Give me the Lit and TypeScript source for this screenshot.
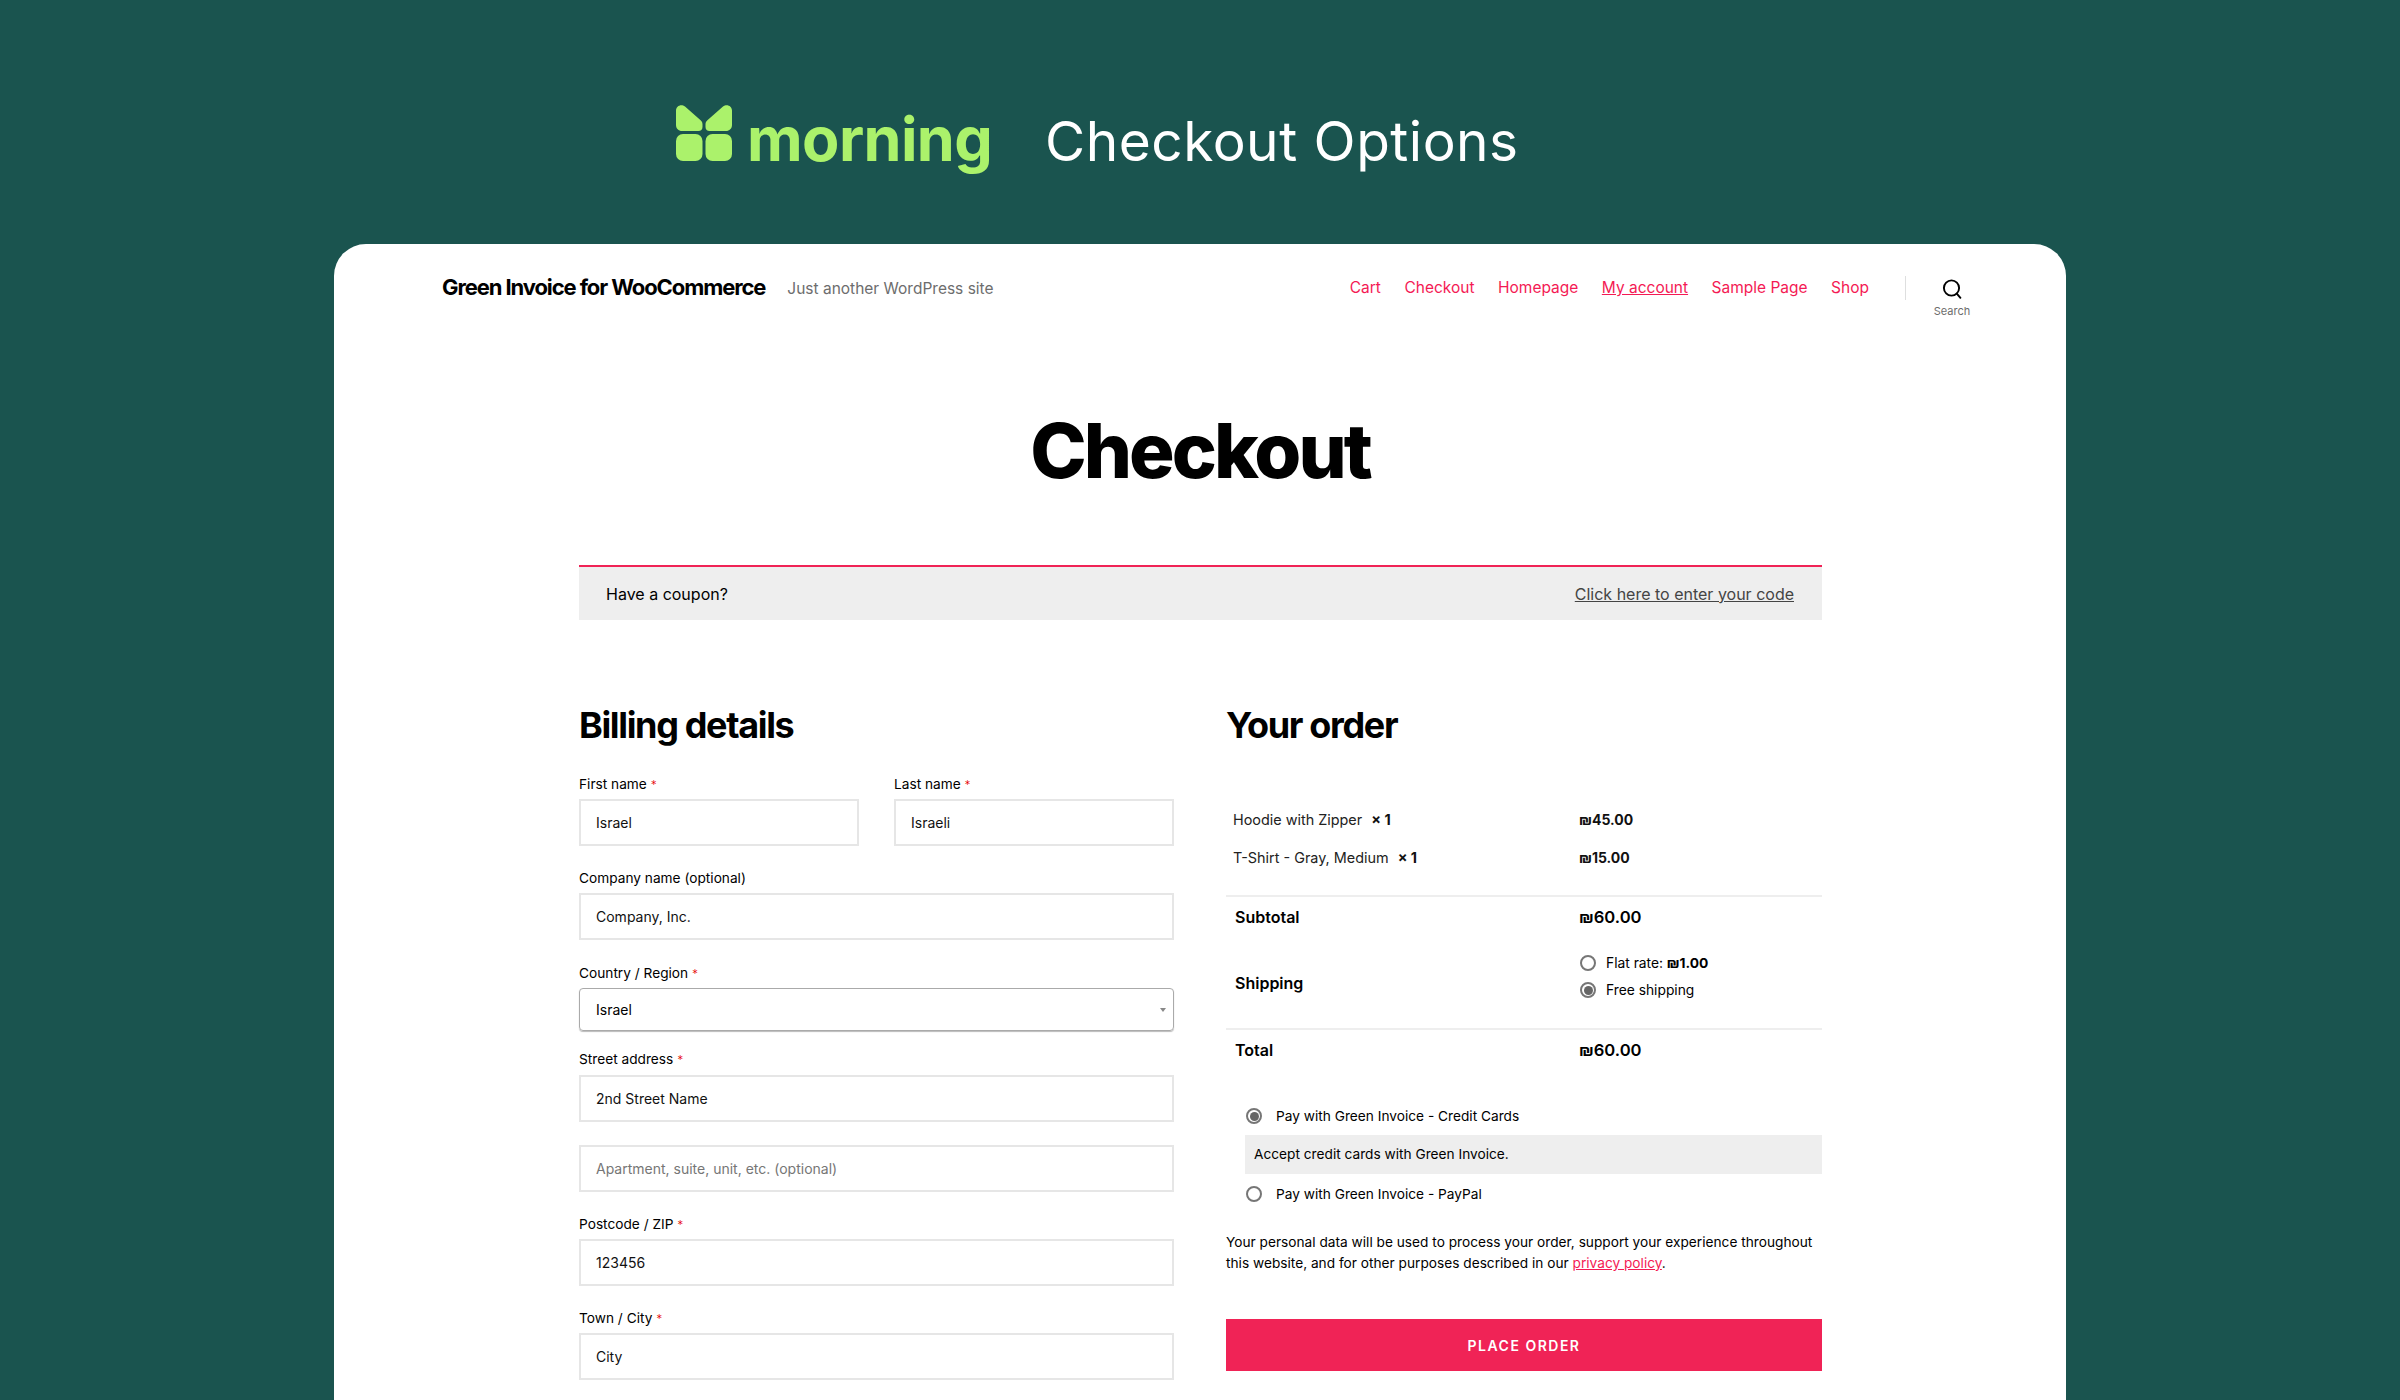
import { LitElement, html, css } from "lit";
import { customElement } from "lit/decorators.js";

@customElement("app-root")
export class AppRoot extends LitElement {
  static styles = css`
    :host {
      display: block;
      width: 2400px;
      height: 1400px;
      overflow: hidden;
      background: #1a544f;
      font-family: Inter, "Liberation Sans", sans-serif;
      color: #000;
    }
    .banner {
      display: flex;
      align-items: flex-start;
      height: 244px;
      box-sizing: border-box;
      padding: 105px 0 0 676px;
    }
    .logo-mark {
      width: 56px;
      height: 56px;
      flex: none;
    }
    .logo-word {
      margin: 6px 0 0 15px;
      font-size: 61px;
      font-weight: 700;
      line-height: 56px;
      letter-spacing: -0.6px;
      color: #abf26b;
      width: 298px;
    }
    .banner-title {
      margin-top: 8px;
      font-size: 55px;
      font-weight: 400;
      line-height: 56px;
      color: #fff;
      letter-spacing: 0.5px;
    }
    .card {
      margin: 0 334px;
      height: 1156px;
      background: #fff;
      border-radius: 32px 32px 0 0;
      overflow: hidden;
    }
    .site-header {
      display: flex;
      align-items: flex-start;
      height: 160px;
      box-sizing: border-box;
      padding: 28px 68px 0 108px;
    }
    .site-title {
      font-size: 22px;
      font-weight: 700;
      letter-spacing: -1.1px;
      line-height: 30px;
    }
    .tagline {
      margin-left: 22px;
      font-size: 15.5px;
      color: #6d6d6d;
      line-height: 30px;
      padding-top: 2px;
    }
    .nav {
      display: flex;
      gap: 23.5px;
      margin-left: auto;
      padding-top: 1px;
      font-size: 15.5px;
      line-height: 30px;
      color: #f41a54;
    }
    .nav .current {
      text-decoration: underline;
    }
    .nav-sep {
      width: 1px;
      height: 24px;
      margin: 4px 0 0 36px;
      background: #dedfdf;
    }
    .search {
      display: flex;
      flex-direction: column;
      align-items: center;
      width: 92px;
      font-size: 11px;
      color: #6d6d6d;
      padding-top: 7px;
    }
    .search svg {
      display: block;
      margin-bottom: 5px;
    }
    .page-title {
      margin: 0;
      height: 161px;
      text-align: center;
      font-size: 76px;
      font-weight: 850;
      letter-spacing: -3px;
      line-height: 92px;
    }
    .content {
      margin: 0 244px 0 245px;
    }
    .coupon {
      display: flex;
      justify-content: space-between;
      align-items: center;
      height: 53px;
      border-top: 2px solid #f02356;
      background: #eee;
      padding: 0 28px 0 27px;
      font-size: 16px;
    }
    .coupon a {
      color: #444;
      text-decoration: underline;
    }
    .columns {
      display: grid;
      grid-template-columns: 595px 596px;
      column-gap: 52px;
      margin-top: 83px;
    }
    h2 {
      margin: 0;
      font-size: 36px;
      font-weight: 700;
      letter-spacing: -1.35px;
      line-height: 44px;
      height: 71px;
    }
    .billing .row {
      display: grid;
      grid-template-columns: 280px 280px;
      column-gap: 35px;
    }
    .field {
      display: block;
      margin-bottom: 22px;
      font-size: 13.7px;
    }
    .field.company {
      margin-bottom: 23px;
    }
    .field.tight {
      margin-bottom: 18px;
    }
    .label {
      display: block;
      height: 20px;
      line-height: 20px;
      margin-bottom: 5px;
    }
    .req {
      color: #e60000;
      font-size: 12px;
      font-weight: 300;
      line-height: 1;
    }
    .input {
      display: block;
      width: 100%;
      height: 47px;
      box-sizing: border-box;
      border: 2px solid #e6e6e6;
      padding: 0 15px;
      font: inherit;
      font-size: 14px;
      color: #111;
      background: #fff;
      outline: none;
    }
    .input::placeholder {
      color: #767676;
    }
    .input.street {
      margin-top: 6px;
    }
    .input.street2 {
      margin-top: 23px;
    }
    .select {
      display: flex;
      align-items: center;
      justify-content: space-between;
      height: 43px;
      box-sizing: border-box;
      border: 1px solid #aaa;
      box-shadow: 0 1px 1px #bbb;
      border-radius: 4px;
      padding: 0 7px 0 16px;
      font-size: 14px;
    }
    .caret {
      width: 0;
      height: 0;
      border-left: 3px solid transparent;
      border-right: 3px solid transparent;
      border-top: 4px solid #888;
    }
    .order-table {
      margin-top: 26px;
      font-size: 14.4px;
    }
    .items {
      padding-bottom: 19px;
    }
    .item {
      display: grid;
      grid-template-columns: 346px 1fr;
      height: 38px;
      align-items: center;
      padding-left: 7px;
      color: #222;
    }
    .item b {
      font-size: 14px;
      font-weight: 700;
      color: #111;
    }
    .qty {
      margin-left: 5px;
      font-weight: 700;
      color: #111;
    }
    .total-row {
      display: grid;
      grid-template-columns: 344px 1fr;
      align-items: center;
      border-top: 2px solid #eee;
      padding-left: 9px;
      font-size: 16px;
      font-weight: 600;
      box-sizing: border-box;
    }
    .total-row.subtotal,
    .total-row.total {
      height: 42px;
    }
    .price {
      font-size: 16.6px;
    }
    .total-row.shipping {
      height: 91px;
      border-top: none;
    }
    .ship-options {
      display: flex;
      flex-direction: column;
      gap: 7px;
      margin-left: 1px;
      padding-bottom: 12px;
      font-size: 13.8px;
      font-weight: 400;
    }
    .option {
      display: flex;
      align-items: center;
      gap: 10px;
      line-height: 20px;
    }
    .option b {
      font-weight: 700;
    }
    .radio {
      display: block;
      width: 16px;
      height: 16px;
      flex: none;
      box-sizing: border-box;
      border: 2px solid #767676;
      border-radius: 50%;
      background: #fff;
    }
    .radio.on {
      padding: 1.5px;
      background: #666 content-box;
    }
    .payment {
      margin-top: 26px;
      font-size: 13.7px;
    }
    .pay-option {
      display: flex;
      align-items: center;
      gap: 14px;
      height: 40px;
      padding-left: 20px;
    }
    .pay-option.first {
      height: 39px;
    }
    .pay-desc {
      margin-left: 19px;
      height: 39px;
      line-height: 39px;
      padding-left: 9px;
      background: #eee;
    }
    .privacy {
      margin: 18px 0 0;
      font-size: 13.7px;
      line-height: 21px;
    }
    .privacy a {
      color: #f41a54;
      text-decoration: underline;
    }
    .place-order {
      display: block;
      width: 100%;
      height: 52px;
      margin-top: 45px;
      border: none;
      background: #f02356;
      color: #fff;
      font: 600 14px Inter, "Liberation Sans", sans-serif;
      letter-spacing: 1.5px;
    }
  `;

  field(label: string, value: string, req = true, cls = "") {
    return html`<label class="field ${cls}">
      <span class="label">${label}${req ? html` <span class="req">*</span>` : ""}</span>
      <input class="input" .value=${value} />
    </label>`;
  }

  render() {
    return html`
      <div class="banner">
        <svg class="logo-mark" viewBox="0 0 56 56" fill="#abf26b">
          <path d="M0 5.5C0 .8 5.4-1.5 9 1.6L24.6 15.2C25.9 16.3 26.5 17.7 26.5 19.3V22C26.5 24.5 24.8 26 22.5 26H6C2.6 26 0 23.6 0 20Z" />
          <path d="M56 5.5C56 .8 50.6-1.5 47 1.6L31.4 15.2C30.1 16.3 29.5 17.7 29.5 19.3V22C29.5 24.5 31.2 26 33.5 26H50C53.4 26 56 23.6 56 20Z" />
          <rect x="0" y="29" width="26.5" height="27" rx="7" />
          <rect x="29.5" y="29" width="26.5" height="27" rx="7" />
        </svg>
        <div class="logo-word">morning</div>
        <div class="banner-title">Checkout Options</div>
      </div>
      <div class="card">
        <header class="site-header">
          <div class="site-title">Green Invoice for WooCommerce</div>
          <div class="tagline">Just another WordPress site</div>
          <nav class="nav">
            <span>Cart</span>
            <span>Checkout</span>
            <span>Homepage</span>
            <span class="current">My account</span>
            <span>Sample Page</span>
            <span>Shop</span>
          </nav>
          <div class="nav-sep"></div>
          <div class="search">
            <svg width="20" height="20" viewBox="0 0 20 20" fill="none" stroke="#000" stroke-width="1.9">
              <circle cx="9.5" cy="9" r="7.6" />
              <path d="M14.8 14.6l3.6 4.2" stroke-linecap="round" />
            </svg>
            Search
          </div>
        </header>
        <h1 class="page-title">Checkout</h1>
        <div class="content">
          <div class="coupon">
            <span>Have a coupon?</span>
            <a>Click here to enter your code</a>
          </div>
          <div class="columns">
            <section class="billing">
              <h2>Billing details</h2>
              <div class="row">
                ${this.field("First name", "Israel")}
                ${this.field("Last name", "Israeli")}
              </div>
              ${this.field("Company name (optional)", "Company, Inc.", false, "company")}
              <div class="field tight">
                <span class="label">Country / Region <span class="req">*</span></span>
                <div class="select"><span>Israel</span><span class="caret"></span></div>
              </div>
              <label class="field">
                <span class="label">Street address <span class="req">*</span></span>
                <input class="input street" .value=${"2nd Street Name"} />
                <input class="input street2" placeholder="Apartment, suite, unit, etc. (optional)" />
              </label>
              ${this.field("Postcode / ZIP", "123456")}
              ${this.field("Town / City", "City")}
            </section>
            <section class="order">
              <h2>Your order</h2>
              <div class="order-table">
                <div class="items">
                  <div class="item">
                    <span>Hoodie with Zipper <span class="qty">× 1</span></span>
                    <b>₪45.00</b>
                  </div>
                  <div class="item">
                    <span>T-Shirt - Gray, Medium <span class="qty">× 1</span></span>
                    <b>₪15.00</b>
                  </div>
                </div>
                <div class="total-row subtotal"><span>Subtotal</span><span class="price">₪60.00</span></div>
                <div class="total-row shipping">
                  <span>Shipping</span>
                  <div class="ship-options">
                    <div class="option"><i class="radio"></i><span>Flat rate: <b>₪1.00</b></span></div>
                    <div class="option"><i class="radio on"></i><span>Free shipping</span></div>
                  </div>
                </div>
                <div class="total-row total"><span>Total</span><span class="price">₪60.00</span></div>
              </div>
              <div class="payment">
                <div class="pay-option first"><i class="radio on"></i><span>Pay with Green Invoice - Credit Cards</span></div>
                <div class="pay-desc">Accept credit cards with Green Invoice.</div>
                <div class="pay-option"><i class="radio"></i><span>Pay with Green Invoice - PayPal</span></div>
              </div>
              <p class="privacy">
                Your personal data will be used to process your order, support your experience throughout
                this website, and for other purposes described in our <a>privacy policy</a>.
              </p>
              <button class="place-order">PLACE ORDER</button>
            </section>
          </div>
        </div>
      </div>
    `;
  }
}
